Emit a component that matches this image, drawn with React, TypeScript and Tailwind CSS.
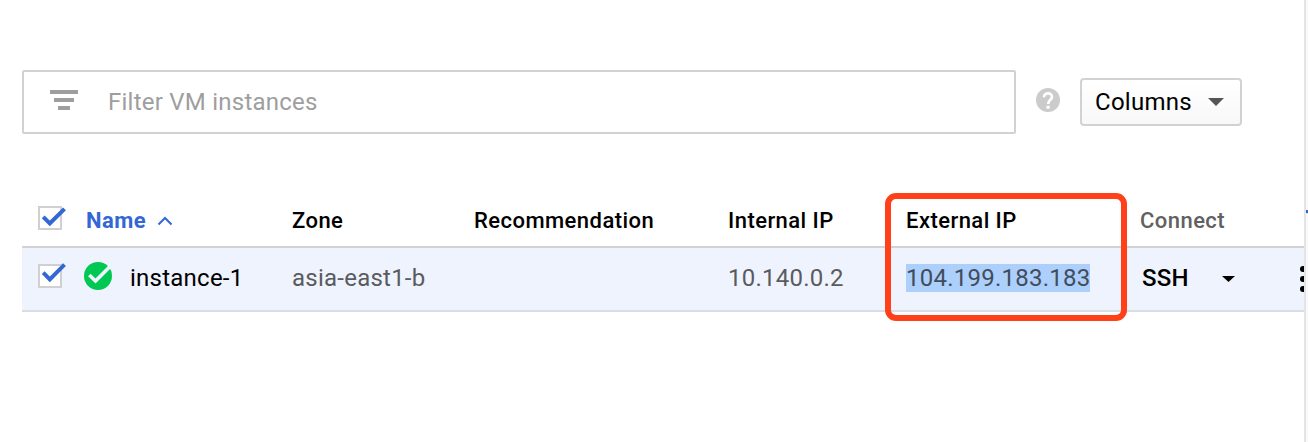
import React from "react";

const COLS = "grid grid-cols-[64px_206px_182px_254px_178px_234px_164px]";

function Checkbox({ raised = false }: { raised?: boolean }) {
  return (
    <svg width="32" height="32" viewBox="0 0 32 32" className="block">
      <rect x="3" y="5" width="22" height="22" fill="#fff" stroke="#d0d0d0" strokeWidth="2" />
      <path
        d={raised ? "M7.200 12.700L13.800 19.300L28.500 4.600" : "M7.200 14.900L13.800 21.500L28.500 6.800"}
        fill="none"
        stroke="#3367d6"
        strokeWidth="4"
      />
    </svg>
  );
}

function FilterBar() {
  return (
    <div className="flex h-16 w-[994px] items-center border-2 border-[#d2d2d2] rounded-[2px] bg-white">
      <svg width="28" height="20" viewBox="0 0 28 20" className="ml-[26px] mb-1 shrink-0" fill="#9e9e9e" shapeRendering="crispEdges">
        <rect x="0" y="0" width="28" height="4" />
        <rect x="4" y="8" width="20" height="4" />
        <rect x="8" y="16" width="12" height="4" />
      </svg>
      <span className="ml-[30px] text-2xl leading-7 tracking-[0.24px] text-[#9e9e9e]">Filter VM instances</span>
    </div>
  );
}

function HelpIcon() {
  return (
    <svg width="24" height="24" viewBox="0 0 24 24" className="ml-5 mt-[18px] block shrink-0">
      <circle cx="12" cy="12" r="12" fill="#cbcbcb" />
      <path d="M8 9.200C8 6.800 9.800 5.300 12 5.300S16 6.800 16 9C16 11.800 12.200 12 12.200 16" fill="none" stroke="#fff" strokeWidth="2.700" />
      <circle cx="12.100" cy="19.300" r="1.800" fill="#fff" />
    </svg>
  );
}

export default function App() {
  return (
    <div className="flex h-[442px] w-[1308px] overflow-hidden bg-white font-['Roboto',sans-serif] text-black">
      <main className="w-[1304px] shrink-0 overflow-hidden pl-[22px] pt-[70px]">
        <div className="flex">
          <FilterBar />
          <HelpIcon />
          <button className="ml-5 mt-2 flex h-12 w-[162px] items-center rounded-[4px] border-2 border-[#d2d2d2] bg-linear-to-b from-white to-[#f8f8f8] pl-[13px]">
            <span className="text-2xl leading-7 tracking-[0.28px]">Columns</span>
            <svg width="16" height="8" viewBox="0 0 16 8" className="ml-4 block">
              <path d="M0 0H16L8 8Z" fill="#555" />
            </svg>
          </button>
        </div>

        <div className="relative mt-[60px]">
          <div className={`${COLS} h-[54px] items-center border-b-2 border-[#d2d2d2] pt-0.5 text-[22px] leading-[26px] font-medium tracking-[0.45px]`}>
            <div className="mb-[6px] pl-[14px]"><Checkbox /></div>
            <div className="flex items-center text-[#3367d6]">
              <span className="font-bold">Name</span>
              <svg width="16" height="10" viewBox="0 0 16 10" className="ml-[11px] block">
                <path d="M1.500 8.500L8 2L14.500 8.500" fill="none" stroke="#3367d6" strokeWidth="2" />
              </svg>
            </div>
            <div>Zone</div>
            <div>Recommendation</div>
            <div>Internal IP</div>
            <div>External IP</div>
            <div className="text-[#616161]">Connect</div>
          </div>
          <div className={`${COLS} h-16 items-center border-b-2 border-[#d9dde6] bg-[#eff3fd] text-2xl leading-7 tracking-[0.24px] text-[#5a5b5e]`}>
            <div className="mb-[6px] pl-[14px]"><Checkbox raised /></div>
            <div className="flex items-center text-black">
              <svg width="28" height="28" viewBox="0 0 28 28" className="-ml-[2px] mb-[6px] block">
                <circle cx="14" cy="14" r="14" fill="#00c853" />
                <path d="M5.300 13L11.500 19L26 4.500" fill="none" stroke="#eff3fd" strokeWidth="3.600" />
              </svg>
              <span className="ml-[18px] mb-0.5">instance-1</span>
            </div>
            <div className="mb-0.5">asia-east1-b</div>
            <div />
            <div className="mb-0.5">10.140.0.2</div>
            <div className="mb-0.5"><span className="bg-[#accffc] text-[#424c5a]">104.199.183.183</span></div>
            <div className="flex items-center pl-[2px] text-black">
              <span className="mb-0.5 font-medium">SSH</span>
              <svg width="13" height="6" viewBox="0 0 13 6" className="ml-[33px] block">
                <path d="M0 0H13L6.500 6Z" fill="#000" />
              </svg>
              <svg width="6" height="28" viewBox="0 0 6 28" className="ml-auto block shrink-0">
                <circle cx="5" cy="4" r="3" />
                <circle cx="5" cy="14" r="3" />
                <circle cx="5" cy="24" r="3" />
              </svg>
            </div>
          </div>
          <div className="absolute -top-px left-[863px] h-32 w-[242px] rounded-[11px] border-[6px] border-[#ff4019]" />
        </div>
      </main>
      <aside className="w-1 shrink-0 border-l-2 border-[#e4e4e4] bg-[#fafafa] pt-[210px]">
        <div className="h-1 border-b border-[#e4e4e4] bg-[#3367d6]" />
      </aside>
    </div>
  );
}
